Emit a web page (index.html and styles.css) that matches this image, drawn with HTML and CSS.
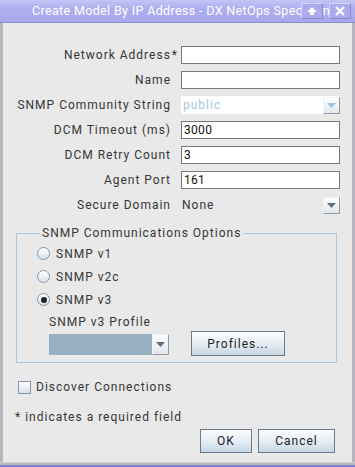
FILE: index.html
```html
<!DOCTYPE html>
<html>
<head>
<meta charset="utf-8">
<link rel="stylesheet" href="styles.css">
</head>
<body>
<div class="window">
  <div class="titlebar">
    <span class="title">Create Model By IP Address - DX NetOps Spectrum</span>
    <div class="tbtns">
      <span class="tbtn"><svg width="12" height="10" viewBox="0 0 12 10"><path d="M6 1 L11 6 H8 V9 H4 V6 H1 Z" fill="#fff"/></svg></span>
      <span class="tbtn"><svg width="12" height="10" viewBox="0 0 12 10"><path d="M2 1 L10 9 M10 1 L2 9" stroke="#fff" stroke-width="2.2"/></svg></span>
    </div>
  </div>
  <div class="body">
    <div class="form">
      <label class="lbl">Network Address<span class="req">*</span></label>
      <div class="input"></div>
      <label class="lbl">Name</label>
      <div class="input"></div>
      <label class="lbl">SNMP Community String</label>
      <div class="combo disabled"><span class="ctext">public</span><span class="arrow"><svg width="9" height="5" viewBox="0 0 9 5"><path d="M0 0 H9 L4.5 5 Z" fill="#9ec4e0"/></svg></span></div>
      <label class="lbl">DCM Timeout (ms)</label>
      <div class="input">3000</div>
      <label class="lbl">DCM Retry Count</label>
      <div class="input">3</div>
      <label class="lbl">Agent Port</label>
      <div class="input">161</div>
      <label class="lbl">Secure Domain</label>
      <div class="combo plain"><span class="ctext">None</span><span class="arrow"><svg width="9" height="5" viewBox="0 0 9 5"><path d="M0 0 H9 L4.5 5 Z" fill="#5c6e80"/></svg></span></div>
    </div>

    <fieldset class="group">
      <legend>SNMP Communications Options</legend>
      <div class="radio"><span class="rcircle"></span>SNMP v1</div>
      <div class="radio"><span class="rcircle"></span>SNMP v2c</div>
      <div class="radio"><span class="rcircle on"></span>SNMP v3</div>
      <div class="profile">
        <div class="plabel">SNMP v3 Profile</div>
        <div class="prow">
          <div class="pcombo"><span class="pfill"></span><span class="arrow"><svg width="9" height="5" viewBox="0 0 9 5"><path d="M0 0 H9 L4.5 5 Z" fill="#5c6e80"/></svg></span></div>
          <span class="btn profiles">Profiles...</span>
        </div>
      </div>
    </fieldset>

    <div class="check"><span class="cbox"></span>Discover Connections</div>
    <div class="note">* indicates a required field</div>
    <div class="actions">
      <span class="btn ok">OK</span>
      <span class="btn cancel">Cancel</span>
    </div>
  </div>
  <div class="bottom"></div>
</div>
</body>
</html>
```
FILE: styles.css
```css
* { box-sizing: border-box; }
html, body { margin: 0; padding: 0; }
body {
  width: 355px;
  height: 467px;
  overflow: hidden;
  background: #e9e9e9;
  font-family: Roboto, "Liberation Sans", sans-serif;
  font-size: 12px;
  line-height: 14px;
  color: #363636;
  letter-spacing: 1px;
}
.window { width: 355px; height: 467px; display: flex; flex-direction: column; }
.titlebar {
  height: 23px;
  flex: none;
  background: linear-gradient(#c4c4f6, #aeaeee 40%, #a8a8ec);
  border-bottom: 1px solid #8c8cd0;
  position: relative;
  display: flex;
  align-items: center;
}
.title {
  color: #fff;
  padding-left: 32px;
  font-size: 12.5px;
  letter-spacing: 0.35px;
  white-space: nowrap;
  overflow: hidden;
}
.tbtns {
  position: absolute;
  right: 4px;
  top: 3px;
  display: flex;
  gap: 6px;
}
.tbtn {
  width: 22px;
  height: 16px;
  border: 1px solid #d8d8fa;
  border-right-color: #8a8ad0;
  border-bottom-color: #8a8ad0;
  background: #aaaaec;
  display: flex;
  align-items: center;
  justify-content: center;
}
.body {
  flex: 1;
  border-left: 3px solid #b6b6be;
  border-right: 3px solid #b6b6be;
  background: #e9e9e9;
  padding: 23px 12px 0 12px;
}
.bottom {
  height: 5px;
  flex: none;
  background: #b9b9b9;
  border-top: 1px solid #cfcfcf;
  border-bottom: 2px solid #7b7bd6;
}
.form {
  display: grid;
  grid-template-columns: 156px 159px;
  column-gap: 10px;
  row-gap: 7px;
  align-items: center;
}
.lbl { text-align: right; white-space: nowrap; }
.req { letter-spacing: 0; margin-right: -6px; padding-left: 1px; }
.input {
  height: 18px;
  background: #fff;
  border: 1px solid #6f7a84;
  padding-left: 2px;
  line-height: 16px;
  letter-spacing: 0.3px;
  color: #111;
}
.combo {
  height: 18px;
  display: flex;
  align-items: center;
  justify-content: space-between;
}
.combo.disabled { background: #fff; }
.combo.disabled .ctext { color: #a6c6de; padding-left: 2px; }
.combo.plain .ctext { padding-left: 1px; }
.arrow {
  width: 17px;
  height: 17px;
  background: linear-gradient(#fdfdfd, #e2e8ee);
  border: 1px solid #eef2f6;
  border-right-color: #8e9aa6;
  border-bottom-color: #8e9aa6;
  display: flex;
  align-items: center;
  justify-content: center;
}
.group {
  margin: 12px 3px 0 1px;
  border: 1px solid #aac8e2;
  padding: 2px 0 6px 20px;
}
.group legend {
  padding: 0 2px;
  margin-left: 3px;
}
.radio {
  display: flex;
  align-items: center;
  height: 23px;
}
.rcircle {
  width: 13px;
  height: 13px;
  border-radius: 50%;
  border: 1px solid #8896a4;
  background: linear-gradient(#ffffff, #d6e2ec);
  margin-right: 6px;
  position: relative;
}
.rcircle.on::after {
  content: "";
  position: absolute;
  left: 2.5px; top: 2.5px;
  width: 6px; height: 6px;
  border-radius: 50%;
  background: #222;
}
.profile { padding-left: 12px; margin-top: 4px; }
.plabel { height: 16px; }
.prow { display: flex; align-items: center; gap: 22px; }
.pcombo {
  width: 120px;
  height: 21px;
  background: #97afc0;
  display: flex;
  justify-content: flex-end;
  align-items: stretch;
  margin-top: 2px;
}
.pcombo .arrow { height: 21px; width: 17px; }
.btn {
  display: inline-flex;
  align-items: center;
  justify-content: center;
  height: 25px;
  border: 1px solid #6a7a8a;
  background: linear-gradient(#fbfcfd, #e6eef5 50%, #c6d6e4);
  color: #222;
}
.profiles { width: 94px; }
.check {
  display: flex;
  align-items: center;
  margin-top: 17px;
  padding-left: 3px;
}
.cbox {
  width: 13px;
  height: 13px;
  border: 1px solid #8896a4;
  background: linear-gradient(#ffffff, #d6e2ec);
  margin-right: 5px;
}
.note { margin-top: 16px; }
.actions {
  display: flex;
  justify-content: flex-end;
  gap: 6px;
  margin-top: 5px;
  padding-right: 5px;
}
.ok { width: 52px; height: 24px; }
.cancel { width: 77px; height: 24px; }
```
